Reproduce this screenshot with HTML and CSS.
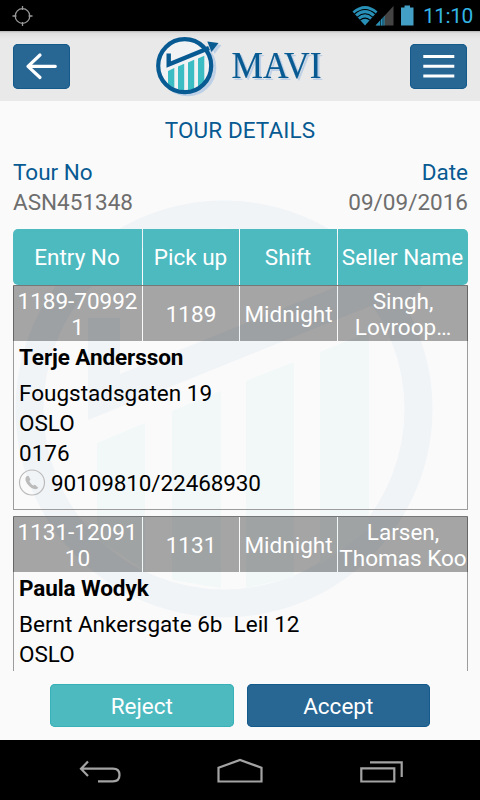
FILE: index.html
```html
<!DOCTYPE html>
<html lang="en">
<head>
    <meta charset="UTF-8">
    <meta name="viewport" content="width=device-width, initial-scale=1.0">
    <title>Mavi - Tour details</title>
    <link rel="stylesheet" href="styles.css">
</head>
<body>
    <div class="statusBar">
      <svg width="22" height="22" viewBox="0 0 22 22" fill="none" stroke="#999" stroke-width="1.3">
        <circle cx="11.5" cy="11" r="7.3"/>
        <path d="M11.5 1v4M11.5 17v4M1.5 11h4M17.5 11h4"/>
      </svg>
      <div class="statusRight">
        <svg width="64" height="22" viewBox="0 0 64 22">
          <!-- wifi -->
          <path d="M0.5 6.5Q13 -4.5 25.5 6.5L13 20.5z" fill="#288fb7"/>
          <path d="M2.5 9Q13 0 23.5 9M5.3 12.1Q13 5.5 20.7 12.1M8 15.2Q13 11 18 15.2" fill="none" stroke="#000" stroke-width="1.1"/>
          <!-- signal -->
          <path d="M41.5 1v19.5H23.5z" fill="#444"/>
          <path d="M32.5 10.7v9.8H23.5z" fill="#288fb7"/>
          <path d="M28.5 10v11M31 10v11" stroke="#000" stroke-width="0.6"/>
          <!-- battery -->
          <path d="M49 2.5h3.5V0.5h5.5V2.5h3.5V20.5H49z" fill="#439fc5"/>
        </svg>
        <span class="clock">11:10</span>
      </div>
    </div>

    <div class="headerContainer">
      <div class="iconButton">
        <svg width="57" height="45" viewBox="0 0 57 45" fill="none" stroke="#fff" stroke-width="3.2" stroke-linecap="round" stroke-linejoin="round">
          <path d="M27 11L15 22.3L27 33.5M15 22.3H42.3"/>
        </svg>
      </div>
      <svg class="logo" width="180" height="68" viewBox="0 0 180 68">
        <defs>
          <g id="mark">
            <circle cx="34.7" cy="33.7" r="26.5" fill="none" stroke-width="4.2"/>
            <path d="M18.7 21.5V32.5L59 16" fill="none" stroke-width="4.4"/>
            <path d="M57.3 9.5L68.5 11L61.5 20z" stroke="none"/>
          </g>
        </defs>
        <use href="#mark" x="3" y="2" fill="#bdd0e6" stroke="#bdd0e6"/>
        <circle cx="34.7" cy="33.7" r="25" fill="#f1f2f3"/>
        <path d="M18 39L24.3 36.1V56L18 52.5zM28 34.5L34.2 31.8V58.5L28 57.5zM38 30.5L44.2 27.8V57L38 58.2zM48 26.5L54.3 23.7V50L48 55.5z" fill="#3bbdc3"/>
        <use href="#mark" fill="#085a92" stroke="#085a92"/>
        <text class="logoText" x="81.5" y="46" textLength="90" lengthAdjust="spacingAndGlyphs">MAVI</text>
      </svg>
      <div class="iconButton">
        <svg width="57" height="45" viewBox="0 0 57 45" stroke="#fff" stroke-width="3">
          <path d="M13.3 12.5H44.3M13.3 22.3H44.3M13.3 32H44.3"/>
        </svg>
      </div>
    </div>

    <div class="content">
      <svg class="watermark" width="480" height="640" viewBox="0 101 480 640">
        <circle cx="224" cy="409" r="194.5" fill="none" stroke="#f0f4f7" stroke-width="28"/>
        <path d="M97 443L145 423V571L97 539zM172 411L221 391V588L172 580zM246 381L294 362V577L246 588zM320 352L369 332V529L320 565z" fill="#f2f8f8"/>
        <path d="M88 318H120V374L380 269L372 245L450 250L402 312L393 297L88 420z" fill="#f0f4f7"/>
      </svg>

      <h1>TOUR DETAILS</h1>
      <div class="tourInfo">
        <div>
          <div class="infoLabel">Tour No</div>
          <div class="infoValue">ASN451348</div>
        </div>
        <div class="alignRight">
          <div class="infoLabel">Date</div>
          <div class="infoValue">09/09/2016</div>
        </div>
      </div>

      <div class="gridRow tableHead">
        <div>Entry No</div>
        <div>Pick up</div>
        <div>Shift</div>
        <div>Seller Name</div>
      </div>

      <div class="entryList">
        <div class="entry">
          <div class="gridRow entryHead">
            <div>1189-70992<br>1</div>
            <div>1189</div>
            <div>Midnight</div>
            <div>Singh,<br>Lovroop…</div>
          </div>
          <div class="entryBody">
            <div class="name">Terje Andersson</div>
            <div>Fougstadsgaten 19</div>
            <div>OSLO</div>
            <div>0176</div>
            <div class="phone">
              <svg width="27" height="27" viewBox="0 0 27 27">
                <circle cx="13" cy="12.5" r="12.5" fill="none" stroke="#bbb" stroke-width="1.2"/>
                <path d="M7.7 6.3C5.7 8 6.3 11.5 9 14.8C11.8 18.3 15.5 20 18.3 18.8L19.3 17.7L16 14.7L14.3 15.6C12.5 14.7 11 12.9 10.3 11.1L11.5 9.7L9.5 5.7z" fill="#bbb"/>
              </svg>
              <span>90109810/22468930</span>
            </div>
          </div>
        </div>

        <div class="entry">
          <div class="gridRow entryHead">
            <div>1131-12091<br>10</div>
            <div>1131</div>
            <div>Midnight</div>
            <div>Larsen,<br>Thomas Koo</div>
          </div>
          <div class="entryBody">
            <div class="name">Paula Wodyk</div>
            <div class="address">Bernt Ankersgate 6b  Leil 12</div>
            <div>OSLO</div>
          </div>
        </div>
      </div>

      <div class="actions">
        <div class="button reject">Reject</div>
        <div class="button accept">Accept</div>
      </div>
    </div>

    <div class="navBar">
      <svg width="480" height="60" viewBox="0 0 480 60" fill="none" stroke="#a3a3a3" stroke-width="2.2">
        <path d="M88 21.5L81 28.7L88 36M81 28.7H113Q119.5 28.7 119.5 35T113 41.3H98"/>
        <path d="M218.5 41.5V27.7L240 20L261.5 27.7V41.5z"/>
        <path d="M361.3 28.3H394.3V41.5H361.3zM370 22.4H401.7V37"/>
      </svg>
    </div>
</body>
</html>
```

FILE: styles.css
```css
:root {
    --blue: #286694;
    --blue-dark: #085a92;
    --teal: #4dbac0;
    --page-color: #fafafa;
}
* {
    box-sizing: border-box;
}
body {
    margin: 0;
    width: 480px;
    height: 800px;
    overflow: hidden;
    display: flex;
    flex-direction: column;
    font: 22.5px/30px Roboto, sans-serif;
    color: #000;
    background-color: var(--page-color);
}
svg {
    display: block;
    flex: none;
}
.statusBar {
    height: 31px;
    padding: 0 8px 0 11px;
    display: flex;
    justify-content: space-between;
    align-items: center;
    background-color: #000;
}
.statusRight {
    display: flex;
    align-items: center;
    gap: 7px;
}
.clock {
    width: 49px;
    padding-top: 1px;
    font-size: 21px;
    letter-spacing: -0.5px;
    color: #33b5e5;
}
.headerContainer {
    height: 70px;
    padding: 0 13px 0 12.5px;
    display: flex;
    justify-content: space-between;
    align-items: center;
    background: linear-gradient(#b5b5b5, #dedede 2px, #e9e9e9 8px);
}
.iconButton {
    width: 57px;
    height: 45px;
    border-radius: 5px;
    background-color: var(--blue);
    box-shadow: inset 0 0 0 1px #145b8c;
}
.logoText {
    font: 37px "Liberation Serif", serif;
    fill: var(--blue-dark);
    stroke: var(--blue-dark);
    stroke-width: 0.2;
    filter: drop-shadow(2px 2px 0 #bdd0e6);
}
.content {
    flex: 1;
    min-height: 0;
    padding: 0 12px 0 13px;
    position: relative;
    z-index: 0;
}
/* faded logo lying behind the whole screen */
.watermark {
    position: absolute;
    top: 0;
    left: 0;
    z-index: -1;
}
h1 {
    margin: 0 1px 0 0;
    padding-top: 14px;
    font-size: 22.5px;
    font-weight: normal;
    letter-spacing: 0.1px;
    text-align: center;
    color: var(--blue-dark);
}
.tourInfo {
    display: flex;
    justify-content: space-between;
    padding-top: 12px;
    height: 84px;
}
.infoLabel {
    color: var(--blue-dark);
}
.infoValue {
    color: #6e6e6e;
}
.alignRight {
    text-align: right;
}
.gridRow {
    display: grid;
    grid-template-columns: 129px 96px 97px 130px;
    column-gap: 1px;
    height: 56px;
    line-height: 26px;
    text-align: center;
    white-space: nowrap;
    color: #fff;
}
.gridRow > div {
    display: flex;
    justify-content: center;
    align-items: center;
}
.tableHead > div {
    padding-right: 1px;
    background-color: var(--teal);
}
.tableHead > div:first-child {
    border-radius: 5px 0 0 5px;
}
.tableHead > div:last-child {
    border-radius: 0 5px 5px 0;
}
.entryList {
    height: 386px;
    overflow: hidden;
}
.entry {
    height: 225px;
    margin-bottom: 6px;
    border: 1px solid #9c9c9c;
    border-top-color: #777;
}
.entryHead {
    margin: 0 -1px;
    height: 55px;
}
.entryHead > div {
    background-color: rgba(0, 0, 0, 0.34);
}
.entryBody {
    padding: 1px 5px;
}
.name {
    font-weight: bold;
    letter-spacing: -0.1px;
    margin-bottom: 6px;
}
.address {
    white-space: pre;
}
.phone {
    display: flex;
    align-items: center;
    gap: 5px;
}
.phone svg {
    overflow: visible;
}
.phone span {
    letter-spacing: -0.1px;
}
.actions {
    display: flex;
    gap: 13px;
    padding: 13px 38px 0 37px;
}
.button {
    flex: 1;
    height: 43px;
    line-height: 45px;
    border-radius: 5px;
    text-align: center;
    color: #fff;
}
.reject {
    background-color: var(--teal);
    box-shadow: inset 0 0 0 1px #37b0b7;
}
.accept {
    background-color: var(--blue);
    box-shadow: inset 0 0 0 1px #145b8c;
}
.navBar {
    height: 60px;
    background-color: #000;
}
```
